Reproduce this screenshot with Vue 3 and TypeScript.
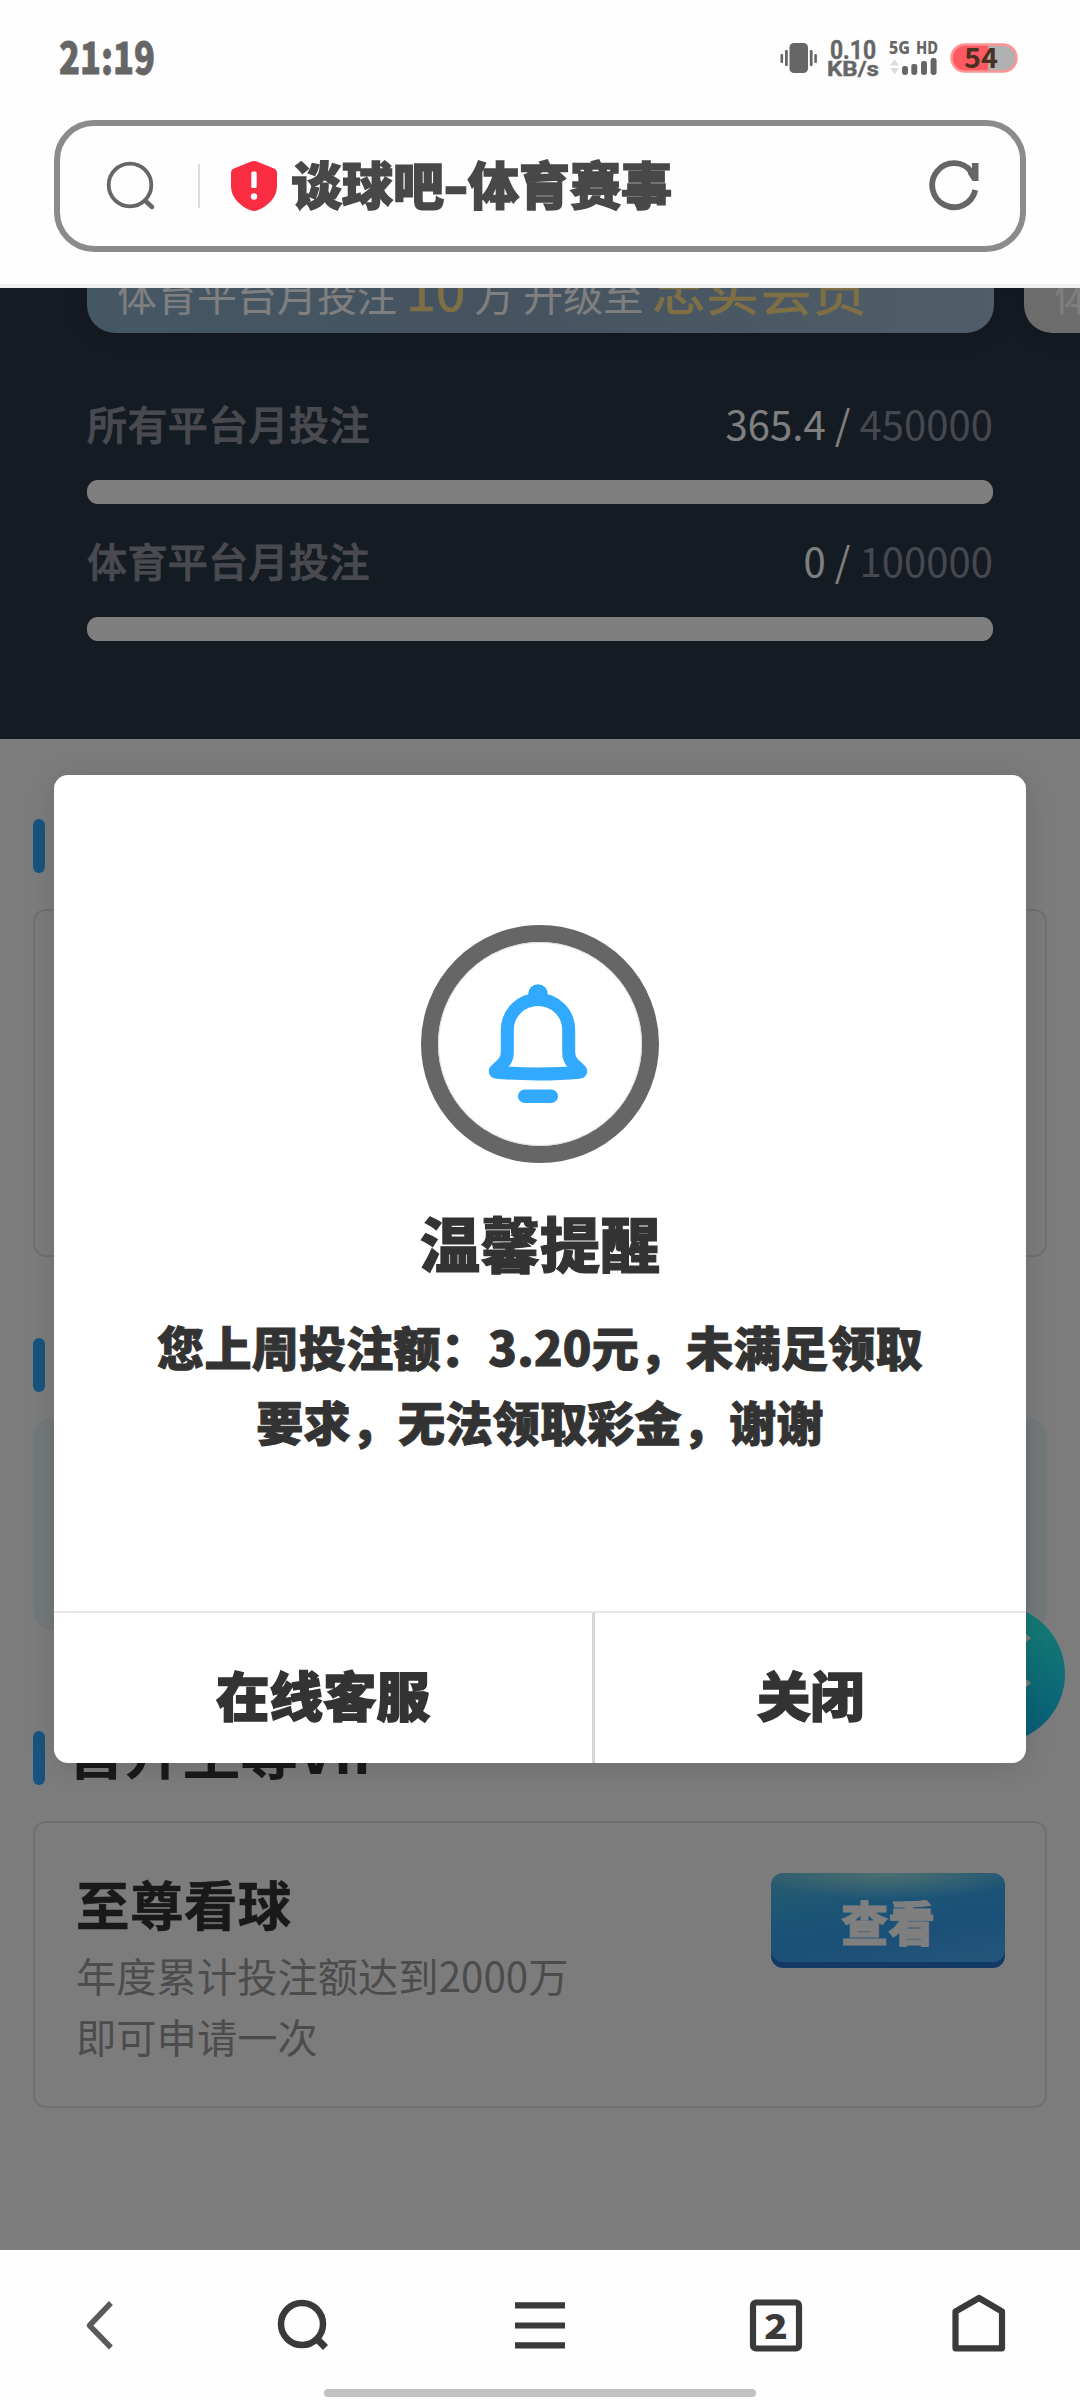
<script setup lang="ts">
interface Progress {
  label: string
  value: string
  target: string
}

const progress: Progress[] = [
  { label: '所有平台月投注', value: '365.4', target: '450000' },
  { label: '体育平台月投注', value: '0', target: '100000' },
]
const messageLines: string[] = ['您上周投注额：3.20元，未满足领取', '要求，无法领取彩金，谢谢']
</script>

<template>
  <div class="screen">
    <header class="status">
      <svg class="status-svg" width="1080" height="120" viewBox="0 0 1080 120">
        <text class="digits" x="59" y="74" font-size="44" textLength="96" lengthAdjust="spacingAndGlyphs">21:19</text>
        <g fill="#666">
          <rect x="789.5" y="43" width="18.5" height="30" rx="4.5" />
          <rect x="780.5" y="54" width="2.6" height="9" rx="1" />
          <rect x="785" y="50" width="2.8" height="16" rx="1" />
          <rect x="809.8" y="50" width="2.8" height="16" rx="1" />
          <rect x="814.3" y="54" width="2.6" height="9" rx="1" />
          <rect x="902" y="66" width="6" height="9" rx="2.4" />
          <rect x="911.3" y="64" width="6" height="11" rx="2.4" />
          <rect x="921" y="61" width="6" height="14" rx="2.4" />
          <rect x="930.6" y="58" width="6" height="17" rx="2.4" />
        </g>
        <text class="digits narrow" x="830" y="58.500" font-size="25" textLength="46" lengthAdjust="spacingAndGlyphs">0.10</text>
        <text class="digits narrow" x="827" y="75.500" font-size="20" textLength="52" lengthAdjust="spacingAndGlyphs">KB/s</text>
        <text class="net" x="889" y="53.500" font-size="17.500" textLength="21" lengthAdjust="spacingAndGlyphs">5G</text>
        <text class="net" x="916" y="53.500" font-size="17.500" textLength="22" lengthAdjust="spacingAndGlyphs">HD</text>
        <path d="M890 65.500l4.500-6 4.500 6zM890 68l4.500 6.500 4.500-6.500z" fill="#ddd" />
        <clipPath id="charge"><rect x="951" y="44" width="66" height="28" rx="14" /></clipPath>
        <g clip-path="url(#charge)">
          <rect x="951" y="44" width="66" height="28" fill="#b1b1b1" />
          <rect x="951" y="44" width="37" height="28" fill="#ff5a62" />
        </g>
        <rect x="951.500" y="44.500" width="65" height="27" rx="13.500" fill="none" stroke="#ff9494" stroke-width="2.500" />
        <text class="charge" x="964" y="67.500" font-size="28" textLength="34" lengthAdjust="spacingAndGlyphs">54</text>
      </svg>
    </header>

    <div class="address-wrap">
      <div class="address">
        <svg class="find" width="50" height="50" viewBox="0 0 50 50" fill="none" stroke="#666">
          <circle cx="24" cy="24" r="21.300" stroke-width="3.800" />
          <path d="M39 39.500l7 6.500" stroke-width="4.500" stroke-linecap="round" />
        </svg>
        <i class="sep"></i>
        <svg class="shield" width="46" height="50" viewBox="0 0 46 50">
          <path d="M19.500.8q3.500-1.500 7 0L43 7.500q3 1.300 3 4.500v13.500C46 36 37.500 45 26.500 49.200q-3.500 1.500-7 0C8.500 45 0 36 0 25.500V12q0-3.200 3-4.500z" fill="#f92c42" />
          <rect x="20.300" y="10.500" width="5.400" height="16.500" rx="1.500" fill="#fff" />
          <circle cx="23" cy="35.500" r="3.200" fill="#fff" />
        </svg>
        <span class="site">谈球吧<span class="dash">-</span>体育赛事</span>
        <svg class="reload" width="52" height="52" viewBox="0 0 52 52" fill="none" stroke="#666">
          <path d="M47.300 30A21.800 22 0 1 1 43.500 12" stroke-width="5.800" />
          <path d="M44 3h6.500v18H44.500L39.500 13 44 11z" fill="#666" stroke="none" />
        </svg>
      </div>
    </div>

    <main class="page">
      <section class="hero">
        <div class="levels">
          <div class="level">
            <p>体育平台月投注 <b class="ten">10</b> 万 升级至 <b class="member">忠实会员</b></p>
          </div>
          <div class="level next"><p>体</p></div>
        </div>
        <div v-for="p in progress" :key="p.label" class="progress">
          <div class="progress-row">
            <span class="progress-label">{{ p.label }}</span>
            <span class="progress-value">{{ p.value }} / <em>{{ p.target }}</em></span>
          </div>
          <div class="track"></div>
        </div>
      </section>

      <section class="sections">
        <div class="heading first"><i></i></div>
        <div class="card tall"></div>
        <div class="heading second"><i></i></div>
        <div class="tint"></div>
        <div class="heading third"><i></i><h2>晋升至尊VIP</h2></div>
        <div class="card perk">
          <div>
            <h3>至尊看球</h3>
            <p>年度累计投注额达到2000万<br />即可申请一次</p>
          </div>
          <button class="view">查看</button>
        </div>
      </section>

      <svg class="service" width="140" height="140" viewBox="0 0 140 140">
        <defs>
          <linearGradient id="teal" x1="0.300" y1="0" x2="0.150" y2="1">
            <stop offset="0.100" stop-color="#28f0ea" />
            <stop offset="1" stop-color="#0cb0f0" />
          </linearGradient>
        </defs>
        <circle cx="70" cy="71" r="69" fill="url(#teal)" />
        <path d="M90 31h10l5 4-5 4H90zM90 76h10l5 4-5 4H90z" fill="#fff" />
      </svg>

      <div class="mask"></div>

      <div class="dialog" role="dialog">
        <svg class="bell" width="238" height="238" viewBox="0 0 238 238">
          <circle cx="119" cy="119" r="110.500" fill="none" stroke="#666" stroke-width="17" />
          <circle cx="119" cy="119" r="101.500" fill="none" stroke="#ddd" stroke-width="1" />
          <path d="M117 74.500C101 74.500 86.300 87 86.300 105V127C86.300 137 80 140 74.500 145.500C74 147 74.500 147 76 147.200C99 149.500 135 149.500 158 147.200C159.500 147 160 147 159.500 145.500C154 140 147.700 137 147.700 127V105C147.700 87 133 74.500 117 74.500Z" fill="none" stroke="#31a9ff" stroke-width="13" stroke-linejoin="round" />
          <circle cx="117" cy="69" r="9.800" fill="#31a9ff" />
          <rect x="97" y="164.500" width="40" height="13.500" rx="6.700" fill="#31a9ff" />
        </svg>
        <h1>温馨提醒</h1>
        <div class="message"><p v-for="line in messageLines" :key="line">{{ line }}</p></div>
        <div class="actions">
          <button class="support">在线客服</button>
          <button class="close">关闭</button>
        </div>
      </div>
    </main>

    <nav class="toolbar">
      <svg width="1080" height="150" viewBox="0 0 1080 150" fill="none" stroke="#3a3a3a" stroke-width="6.200">
        <path d="M109 55L89.500 75.500L109 95.500" stroke="#5a5a5a" stroke-linejoin="round" stroke-linecap="square" stroke-width="5.500" />
        <circle cx="302" cy="74" r="21" stroke-width="6.500" />
        <path d="M317.500 89.500l8 8" stroke-width="7" />
        <path d="M515 55.300h50M515 75.500h50M515 95.400h50" />
        <rect x="753" y="52.500" width="46" height="46" rx="3" />
        <path d="M955.500 61.500L979 48 1002 61.500V98.300H955.500z" stroke-linejoin="round" />
        <text class="tabs" x="764" y="89" textLength="24" lengthAdjust="spacingAndGlyphs">2</text>
        <rect x="324" y="139" width="432" height="8" rx="4" fill="#c2c2c2" stroke="none" />
      </svg>
    </nav>
  </div>
</template>

<style>
body {
  margin: 0;
}
</style>

<style scoped>
.screen {
  width: 1080px;
  height: 2400px;
  display: flex;
  flex-direction: column;
  overflow: hidden;
  background: #fefefe;
  font-family: "Noto Sans CJK SC", sans-serif;
}
h1, h2, h3, p {
  margin: 0;
}
button {
  border: 0;
  padding: 0;
  background: none;
  font-family: inherit;
}
svg {
  display: block;
  flex: none;
}
.status {
  height: 120px;
}
.digits {
  font-family: "Noto Sans CJK SC", sans-serif;
  font-weight: 900;
  fill: #666;
  stroke: #666;
  stroke-width: 0.8px;
}
.narrow {
  font-family: Roboto, sans-serif;
  font-weight: 700;
  stroke-width: 0.4px;
}
.net {
  font-family: "Noto Sans", sans-serif;
  font-weight: 800;
  fill: #666;
}
.charge {
  font-family: "Noto Sans CJK SC", sans-serif;
  font-weight: 700;
  fill: #4a3020;
}
.tabs {
  font-family: "Noto Sans CJK SC", sans-serif;
  font-weight: 900;
  font-size: 35px;
  fill: #3a3a3a;
  stroke: none;
}
.address-wrap {
  height: 164px;
  padding: 0 54px;
  border-bottom: 4px solid #f1f1f1;
}
.address {
  box-sizing: border-box;
  height: 132px;
  border: 6px solid #8b8b8b;
  border-radius: 40px;
  display: flex;
  align-items: center;
  padding: 0 40px 0 46px;
}
.sep {
  width: 2px;
  height: 44px;
  margin-left: 42px;
  background: #ddd;
}
.shield {
  margin-left: 31px;
}
.site {
  margin-left: 14px;
  flex: 1;
  font-size: 51px;
  line-height: 60px;
  font-weight: 900;
  color: #484848;
  -webkit-text-stroke: 1.5px #484848;
  margin-top: -6px;
}
.dash {
  display: inline-block;
  width: 24px;
  text-align: center;
  transform: scaleX(1.3);
}
.page {
  position: relative;
  height: 1962px;
  overflow: hidden;
  background: #f9f9f9;
}
.hero {
  box-sizing: border-box;
  height: 451px;
  background: #2a3646;
  overflow: hidden;
}
.levels {
  display: flex;
  gap: 30px;
  margin: -155px 0 60px 87px;
  height: 200px;
}
.level {
  box-sizing: border-box;
  flex: none;
  width: 907px;
  border-radius: 28px;
  padding: 0 0 9px 30px;
  background: linear-gradient(90deg, #8aafca, #8ba6bf 45%, #a0bcd2);
  box-shadow: 0 0 20px rgba(35, 20, 40, 0.35);
  display: flex;
  align-items: flex-end;
  color: #fff;
  font-size: 40px;
  line-height: 60px;
  white-space: pre;
}
.level b {
  font-weight: 400;
  font-size: 53.500px;
  color: #ffdf88;
  -webkit-text-stroke: 0.6px #ffdf88;
}
.next {
  background: #d8d8d8;
}
.progress {
  margin: 0 87px 26px 87px;
}
.progress-row {
  display: flex;
  justify-content: space-between;
  height: 87px;
  line-height: 61px;
  font-size: 40px;
}
.progress-label {
  font-weight: 500;
  letter-spacing: 0.4px;
  color: #9294a0;
  -webkit-text-stroke: 0.8px #9294a0;
}
.progress-value {
  color: #fff;
  letter-spacing: 0.05px;
}
.progress-value em {
  font-style: normal;
  color: #8e909e;
}
.track {
  height: 24px;
  border-radius: 11px;
  background: #fff;
}
.sections {
  padding: 80px 33px 0;
}
.heading {
  display: flex;
  height: 54px;
}
.heading i {
  width: 12px;
  height: 100%;
  border-radius: 6px;
  background: #31a8ff;
}
.heading h2 {
  margin-left: 22px;
  font-size: 58px;
  line-height: 37px;
  font-weight: 700;
  letter-spacing: -0.3px;
  color: #333;
}
.second {
  margin-top: 81px;
}
.third {
  margin-top: 101px;
  height: 54px;
}
.card {
  box-sizing: border-box;
  border: 2px solid #dcdce8;
  border-radius: 13px;
  margin-top: 36px;
}
.tall {
  height: 348px;
}
.tint {
  height: 213px;
  margin-top: 25px;
  border-radius: 20px;
  background: #e6f1f4;
}
.perk {
  height: 287px;
  padding: 49px 40px 0 41px;
  display: flex;
  justify-content: space-between;
  align-items: flex-start;
}
.perk h3 {
  font-size: 53.500px;
  line-height: 62px;
  font-weight: 700;
  letter-spacing: 0.4px;
  color: #333;
  -webkit-text-stroke: 0.6px #333;
}
.perk p {
  margin-top: 10px;
  font-size: 40.300px;
  line-height: 61px;
  color: #999;
}
.view {
  width: 234px;
  height: 95px;
  margin-top: 1px;
  border-radius: 12px;
  background: radial-gradient(ellipse 60% 28% at 50% 0, rgba(190, 240, 225, 0.7), transparent), linear-gradient(170deg, #53b9dc, #38a9ec 35%, #369ff0 60%, #4cb0f6);
  box-shadow: inset 0 -6px 0 #2474c8;
  color: #fff;
  font-size: 47px;
  line-height: 93px;
  font-weight: 900;
  -webkit-text-stroke: 1px #fff;
}
.service {
  position: absolute;
  left: 926px;
  top: 1315px;
}
.mask {
  position: absolute;
  inset: 0;
  background: rgba(0, 0, 0, 0.5);
}
.dialog {
  position: absolute;
  left: 54px;
  top: 487px;
  width: 972px;
  height: 988px;
  border-radius: 14px;
  overflow: hidden;
  background: #fff;
  box-shadow: 0 4px 30px rgba(0, 0, 0, 0.12);
  display: flex;
  flex-direction: column;
  align-items: center;
  color: #333;
}
.bell {
  margin-top: 150px;
}
.dialog h1 {
  margin-top: 39px;
  font-size: 60px;
  line-height: 80px;
  font-weight: 900;
  -webkit-text-stroke: 1.2px #333;
}
.message {
  margin-top: 26px;
  text-align: center;
  font-size: 47px;
  line-height: 75px;
  font-weight: 900;
  letter-spacing: 0.3px;
  -webkit-text-stroke: 1px #333;
}
.actions {
  align-self: stretch;
  margin-top: auto;
  height: 150px;
  border-top: 2px solid #e7e7e7;
  display: flex;
}
.actions button {
  padding-top: 11px;
  font-size: 53.500px;
  font-weight: 900;
  color: #333;
  -webkit-text-stroke: 1.5px #333;
}
.support {
  width: 538px;
}
.actions .close {
  flex: 1;
  border-left: 3px solid #d6d6d6;
}
.toolbar {
  height: 150px;
  background: #fefefe;
}
</style>
